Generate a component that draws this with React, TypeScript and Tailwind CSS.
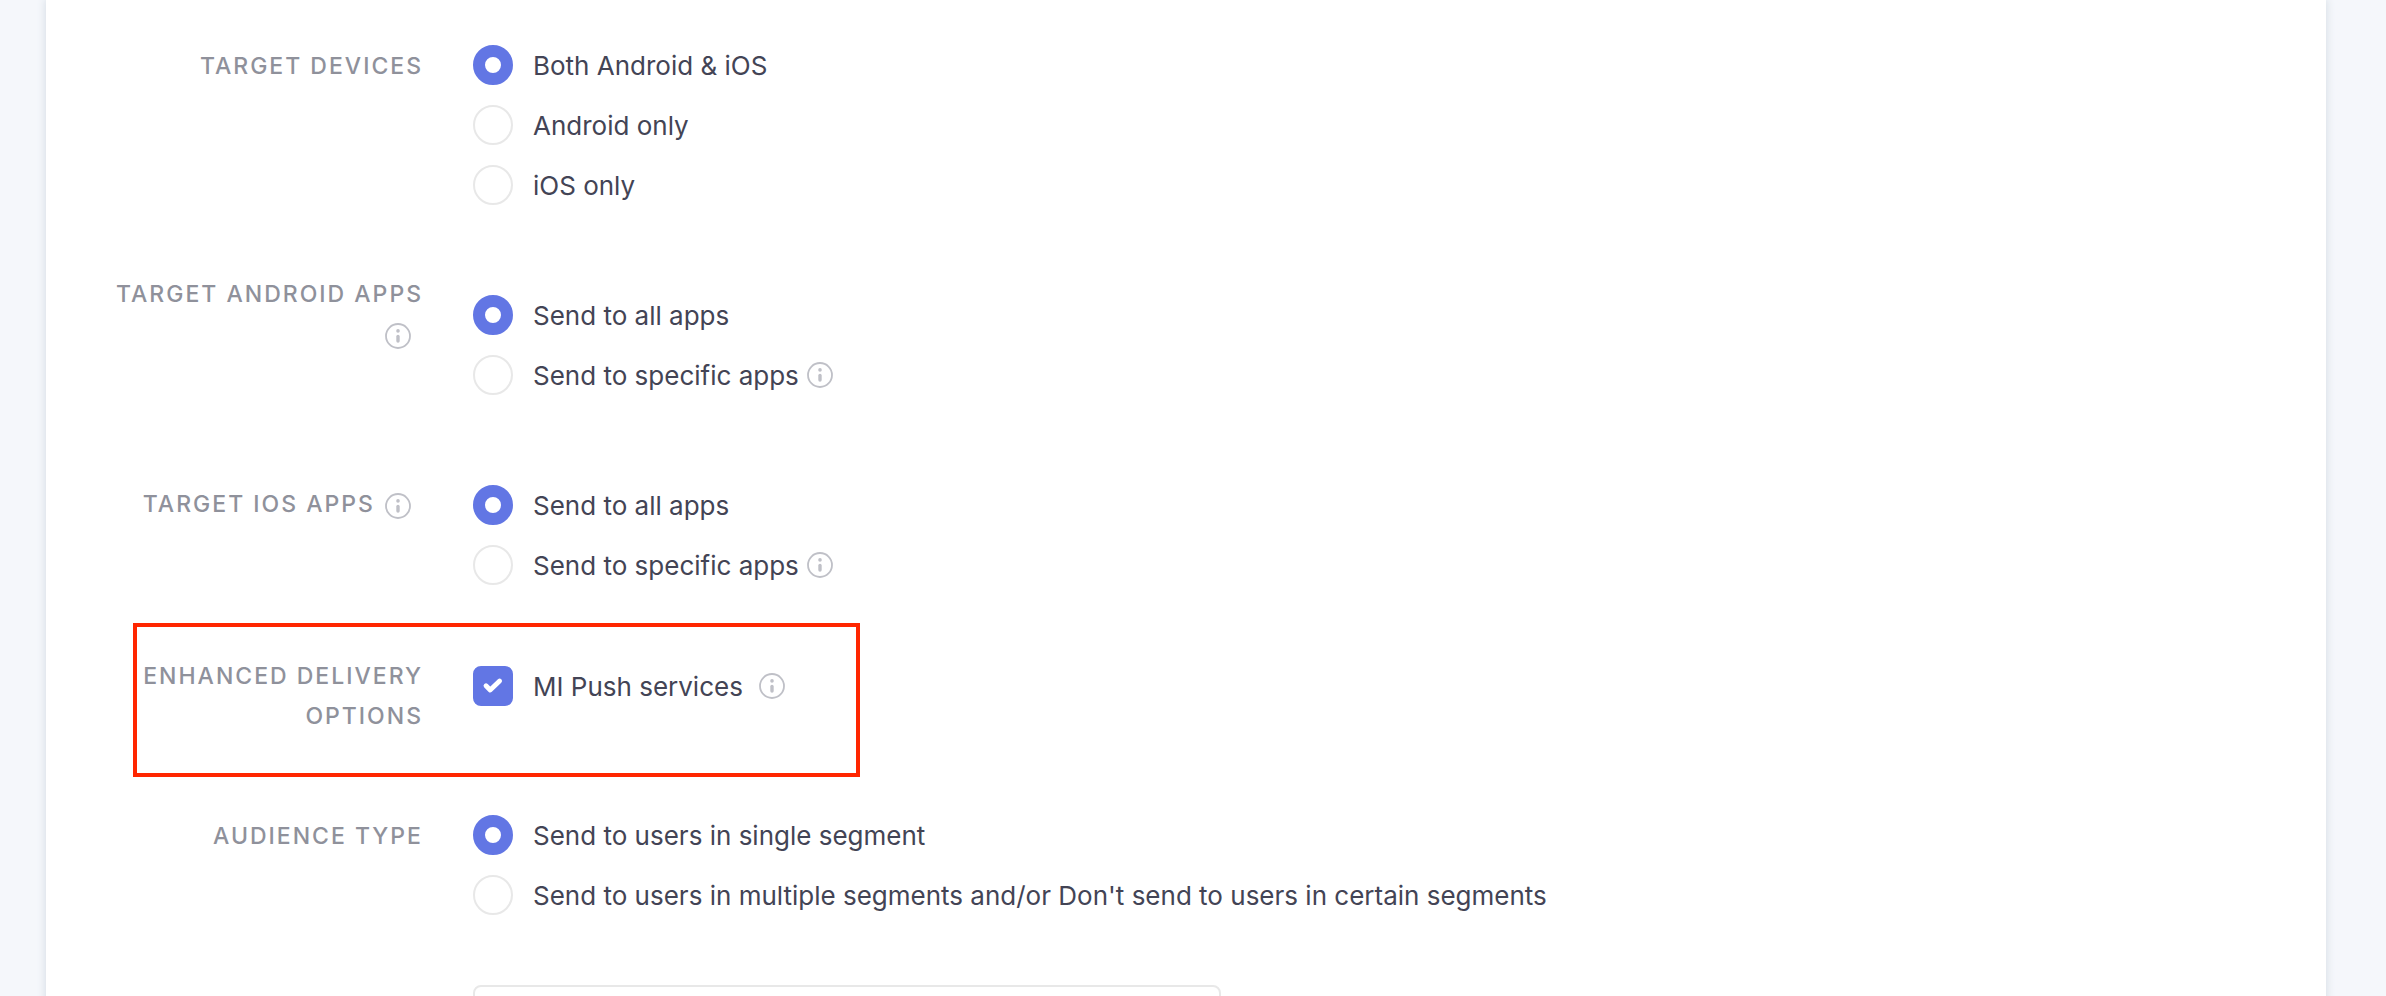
import { useId, useState } from "react";
import type { ReactNode } from "react";

function InfoIcon({ topic }: { topic: string }) {
  return (
    <button type="button" aria-label={`More about ${topic}`} className="inline-flex shrink-0 align-middle">
      <svg viewBox="0 0 26 26" className="size-[26px]" fill="none" aria-hidden="true">
        <circle cx="13" cy="13" r="12" stroke="#bfc0c7" strokeWidth="1.8" />
        <circle cx="13" cy="7.9" r="1.8" fill="#bfc0c7" />
        <path d="M13 13.4v4.6" stroke="#bfc0c7" strokeWidth="3.4" strokeLinecap="round" />
      </svg>
    </button>
  );
}

type RowProps = { id: string; title: string; info?: boolean; className?: string; children: ReactNode };

function Row({ id, title, info, className = "", children }: RowProps) {
  return (
    <section className={`flex items-start gap-[50px] ${className}`}>
      <h2 id={id} className="w-[329px] shrink-0 pt-px text-right text-[23px] leading-10 font-medium tracking-[2px] text-[#8f919b] uppercase">
        {title}
        {info && (
          <>
            {" "}
            <span className="mr-3 ml-0.5 inline-flex align-middle leading-none">
              <InfoIcon topic={title} />
            </span>
          </>
        )}
      </h2>
      {children}
    </section>
  );
}

type Option = { text: string; info?: boolean };

function RadioGroup({ labelledBy, options }: { labelledBy: string; options: Option[] }) {
  const name = useId();
  const [selected, setSelected] = useState(0);
  return (
    <div role="radiogroup" aria-labelledby={labelledBy} className="flex flex-col gap-5">
      {options.map((option, index) => (
        <div key={option.text} className="flex items-center gap-2">
          <label className="flex cursor-pointer items-center gap-5">
            <input
              type="radio"
              name={name}
              checked={selected === index}
              onChange={() => setSelected(index)}
              className="size-10 shrink-0 appearance-none rounded-full border-2 border-[#e8e8e8] bg-white checked:border-12 checked:border-[#6276e4]"
            />
            <span className="pt-0.5">{option.text}</span>
          </label>
          {option.info && <InfoIcon topic={option.text} />}
        </div>
      ))}
    </div>
  );
}

export default function App() {
  const [miPush, setMiPush] = useState(true);
  const appOptions: Option[] = [{ text: "Send to all apps" }, { text: "Send to specific apps", info: true }];

  return (
    <div className="h-screen overflow-hidden bg-[#f5f7fb] pr-[60px] pl-[46px] font-['Inter',sans-serif] text-[26px] leading-[38px] text-[#434455]">
      <main className="min-h-full bg-white px-12 pt-[45px] shadow-[0_0_8px_1px_#d8dfe6]">
        <Row id="devices" title="Target devices">
          <RadioGroup
            labelledBy="devices"
            options={[{ text: "Both Android & iOS" }, { text: "Android only" }, { text: "iOS only" }]}
          />
        </Row>

        <Row id="android" title="Target Android apps" info className="mt-[68px]">
          <div className="pt-[22px]">
            <RadioGroup labelledBy="android" options={appOptions} />
          </div>
        </Row>

        <Row id="ios" title="Target iOS apps" info className="mt-[88px]">
          <div className="pt-0.5">
            <RadioGroup labelledBy="ios" options={appOptions} />
          </div>
        </Row>

        <Row id="delivery" title="Enhanced delivery options" className="relative mt-[70px]">
          <div role="group" aria-labelledby="delivery" className="flex items-center gap-4 pt-[11px]">
            <label className="flex cursor-pointer items-center gap-5">
              <span className="grid size-10 shrink-0 place-items-center">
                <input
                  type="checkbox"
                  checked={miPush}
                  onChange={(event) => setMiPush(event.target.checked)}
                  className="peer col-start-1 row-start-1 size-10 appearance-none rounded-lg border-2 border-[#e8e8e8] bg-white checked:border-[#6276e4] checked:bg-[#6276e4]"
                />
                <svg viewBox="0 0 40 40" fill="none" aria-hidden="true" className="pointer-events-none invisible col-start-1 row-start-1 size-10 peer-checked:visible">
                  <path d="M13 19.7l4.2 4.3 9.4-9" stroke="white" strokeWidth="4.8" strokeLinecap="round" strokeLinejoin="round" />
                </svg>
              </span>
              <span className="pt-0.5">MI Push services</span>
            </label>
            <InfoIcon topic="MI Push services" />
          </div>
          <div className="pointer-events-none absolute -top-8 left-[39px] h-[154px] w-[727px] border-4 border-[#ff2600]" />
        </Row>

        <Row id="audience" title="Audience type" className="mt-[79px]">
          <div className="min-w-0 grow">
            <RadioGroup
              labelledBy="audience"
              options={[
                { text: "Send to users in single segment" },
                { text: "Send to users in multiple segments and/or Don't send to users in certain segments" },
              ]}
            />
            <input
              type="text"
              aria-label="Segment"
              className="mt-[70px] block h-20 w-full max-w-[748px] rounded-lg border-2 border-[#e8e8e8] px-5"
            />
          </div>
        </Row>
      </main>
    </div>
  );
}
